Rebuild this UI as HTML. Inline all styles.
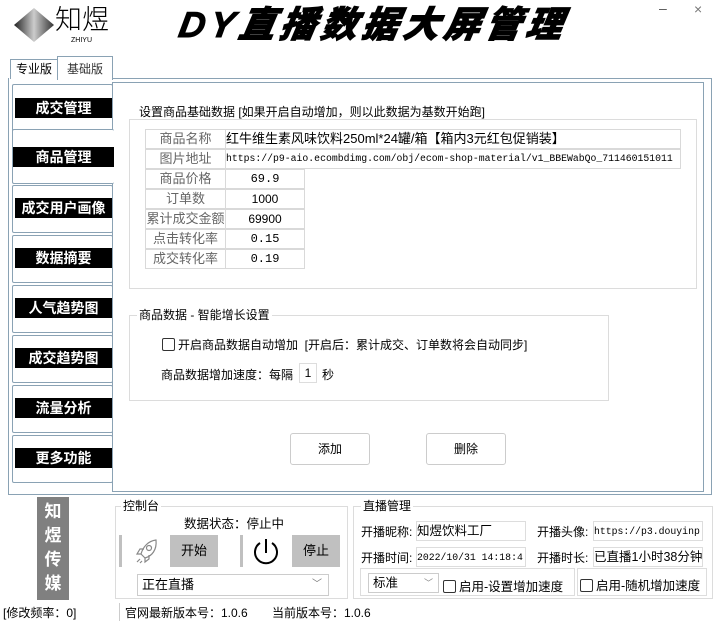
<!DOCTYPE html>
<html><head><meta charset="utf-8"><style>
*{margin:0;padding:0;box-sizing:border-box}
body{width:719px;height:621px;background:#fff;position:relative;overflow:hidden;font-family:"Liberation Sans","Noto Sans CJK SC",sans-serif;font-size:12px;color:#000}
.a{position:absolute}
.title{left:180px;top:-4px;font-size:36px;font-weight:900;font-style:italic;letter-spacing:5px;font-family:"Liberation Sans","Noto Sans CJK SC",sans-serif;transform:skewX(-10deg);white-space:nowrap;-webkit-text-stroke:1px #000}
.nav{position:absolute;left:12px;width:101px;height:48px;border:1px solid #8aa2b4;border-radius:2px;background:#fff}
.nav .bar{position:absolute;left:2px;right:0;top:14px;height:20px;background:#000;color:#fff;font-weight:bold;font-size:14px;text-align:center;line-height:20px}
.grp{position:absolute;border:1px solid #dcdcdc}
.gt{position:absolute;background:#fff;padding:0 2px;font-size:12px;line-height:14px}
.cell{position:absolute;border:1px solid #d9d9d9;height:20px;line-height:18px;font-size:12px;white-space:nowrap;overflow:hidden}
.lab{color:#666;text-align:center;font-size:13px}
.mono{font-family:"Liberation Mono","Noto Sans CJK SC",monospace}
.btn{position:absolute;border:1px solid #ccc;border-radius:3px;text-align:center;background:#fff}
.gb{position:absolute;background:#c0c0c0;text-align:center;font-size:13px}
.cb{display:inline-block;width:13px;height:13px;border:1px solid #333;border-radius:2px;vertical-align:-2px;margin-right:3px}
.inp{position:absolute;border:1px solid #ddd;height:20px;line-height:19px;white-space:nowrap;overflow:hidden;font-size:12px}
</style></head><body>
<svg class="a" style="left:12px;top:6px" width="44" height="38" viewBox="0 0 44 38"><defs><linearGradient id="g" x1="0" x2="1"><stop offset="0" stop-color="#222"/><stop offset=".5" stop-color="#ccc"/><stop offset="1" stop-color="#333"/></linearGradient></defs><polygon points="22,2 42,19 22,36 2,19" fill="url(#g)"/></svg>
<div class="a" style="left:55px;top:4px;font-size:27px;line-height:32px;font-weight:300">知煜</div>
<div class="a" style="left:71px;top:37px;font-size:7px">ZHIYU</div>
<div class="a title">DY直播数据大屏管理</div>
<div class="a" style="left:659px;top:0px;font-size:14px;color:#555">–</div>
<div class="a" style="left:694px;top:1px;font-size:14px;color:#777">×</div>
<div class="a" style="left:10px;top:59px;width:48px;height:20px;border:1px solid #8aa2b4;border-bottom:none;text-align:center;line-height:19px;font-size:12px">专业版</div>
<div class="a" style="left:57px;top:56px;width:56px;height:24px;border:1px solid #8aa2b4;border-bottom:none;background:#fff;text-align:center;line-height:24px;font-size:12px;color:#333">基础版</div>
<div class="a" style="left:8px;top:78px;width:704px;height:417px;border:1px solid #8aa2b4;border-top:none"></div>
<div class="a" style="left:112px;top:78px;width:600px;height:1px;background:#8aa2b4"></div>
<div class="a" style="left:112px;top:82px;width:592px;height:410px;border:1px solid #8aa2b4"></div>
<div class="nav" style="top:84px"><div class="bar" style="top:13px">成交管理</div></div>
<div class="nav" style="top:129px;height:55px;border-right:none;width:102px"><div class="bar" style="left:0;top:17px">商品管理</div></div>
<div class="nav" style="top:185px"><div class="bar" style="top:12px">成交用户画像</div></div>
<div class="nav" style="top:235px"><div class="bar" style="top:12px">数据摘要</div></div>
<div class="nav" style="top:285px"><div class="bar" style="top:12px">人气趋势图</div></div>
<div class="nav" style="top:335px"><div class="bar" style="top:12px">成交趋势图</div></div>
<div class="nav" style="top:385px"><div class="bar" style="top:12px">流量分析</div></div>
<div class="nav" style="top:435px"><div class="bar" style="top:12px">更多功能</div></div>
<div class="grp" style="left:129px;top:119px;width:568px;height:170px"></div>
<div class="gt" style="left:137px;top:105px">设置商品基础数据 [如果开启自动增加，则以此数据为基数开始跑]</div>
<div class="cell lab" style="left:145px;top:129px;width:81px">商品名称</div>
<div class="cell" style="left:225px;top:129px;width:456px;font-size:13px">红牛维生素风味饮料250ml*24罐/箱【箱内3元红包促销装】</div>
<div class="cell lab" style="left:145px;top:149px;width:81px">图片地址</div>
<div class="cell mono" style="left:225px;top:149px;width:456px;font-size:9.8px">https://p9-aio.ecombdimg.com/obj/ecom-shop-material/v1_BBEWabQo_711460151011</div>
<div class="cell lab" style="left:145px;top:169px;width:81px">商品价格</div><div class="cell mono" style="left:225px;top:169px;width:80px;text-align:center">69.9</div>
<div class="cell lab" style="left:145px;top:189px;width:81px">订单数</div><div class="cell" style="left:225px;top:189px;width:80px;text-align:center">1000</div>
<div class="cell lab" style="left:145px;top:209px;width:81px">累计成交金额</div><div class="cell" style="left:225px;top:209px;width:80px;text-align:center">69900</div>
<div class="cell lab" style="left:145px;top:229px;width:81px">点击转化率</div><div class="cell mono" style="left:225px;top:229px;width:80px;text-align:center">0.15</div>
<div class="cell lab" style="left:145px;top:249px;width:81px">成交转化率</div><div class="cell mono" style="left:225px;top:249px;width:80px;text-align:center">0.19</div>
<div class="grp" style="left:129px;top:315px;width:480px;height:86px"></div>
<div class="gt" style="left:137px;top:308px">商品数据 - 智能增长设置</div>
<div class="a" style="left:162px;top:336px;font-size:12px"><span class="cb"></span>开启商品数据自动增加&nbsp; [开启后：累计成交、订单数将会自动同步]</div>
<div class="a" style="left:161px;top:366px;font-size:12px">商品数据增加速度：每隔</div>
<div class="a" style="left:299px;top:363px;width:18px;height:20px;border:1px solid #ddd;text-align:center;line-height:19px">1</div>
<div class="a" style="left:322px;top:366px">秒</div>
<div class="btn" style="left:290px;top:433px;width:80px;height:32px;line-height:30px">添加</div>
<div class="btn" style="left:426px;top:433px;width:80px;height:32px;line-height:30px">删除</div>
<div class="a" style="left:37px;top:497px;width:32px;height:103px;background:#808080;color:#fff;font-weight:bold;font-size:17px;line-height:24px;text-align:center;padding-top:3px">知<br>煜<br>传<br>媒</div>
<div class="grp" style="left:115px;top:506px;width:233px;height:93px"></div>
<div class="gt" style="left:121px;top:499px">控制台</div>
<div class="a" style="left:184px;top:513px;font-size:12.5px">数据状态：停止中</div>
<div class="a" style="left:119px;top:535px;width:3px;height:32px;background:#c0c0c0"></div>
<svg class="a" style="left:134px;top:537px" width="26" height="28" viewBox="0 0 26 28" fill="none" stroke="#888" stroke-width="1.2"><path d="M22 3 C14 4 9 10 7 17 L11 21 C18 19 23 13 22 3Z"/><circle cx="15" cy="11" r="2.5"/><path d="M7 17 L3 17 L6 12 L10 12 M11 21 L11 25 L15 22 L15 18 M6 22 L3 25 M8 24 L6 26"/></svg>
<div class="gb" style="left:170px;top:535px;width:48px;height:32px;line-height:32px">开始</div>
<div class="a" style="left:240px;top:535px;width:3px;height:32px;background:#c0c0c0"></div>
<svg class="a" style="left:251px;top:537px" width="30" height="30" viewBox="0 0 30 30" fill="none" stroke="#000" stroke-width="2"><path d="M9 6 A11 11 0 1 0 21 6"/><path d="M15 2 L15 16"/></svg>
<div class="gb" style="left:292px;top:535px;width:48px;height:32px;line-height:32px">停止</div>
<div class="a" style="left:137px;top:574px;width:192px;height:22px;border:1px solid #ccc;line-height:20px;padding-left:4px;font-size:13px">正在直播<span style="position:absolute;right:6px;color:#777;font-size:10px">﹀</span></div>
<div class="grp" style="left:353px;top:506px;width:360px;height:93px"></div>
<div class="gt" style="left:361px;top:499px">直播管理</div>
<div class="a" style="left:361px;top:523px">开播昵称:</div>
<div class="inp" style="left:416px;top:521px;width:110px;font-size:12.5px">知煜饮料工厂</div>
<div class="a" style="left:537px;top:523px">开播头像:</div>
<div class="inp mono" style="left:593px;top:521px;width:110px;font-size:9.8px">https://p3.douyinp</div>
<div class="a" style="left:361px;top:549px">开播时间:</div>
<div class="inp mono" style="left:416px;top:547px;width:110px;font-size:9.8px">2022/10/31 14:18:4</div>
<div class="a" style="left:537px;top:549px">开播时长:</div>
<div class="inp" style="left:593px;top:547px;width:110px;font-size:12.5px">已直播1小时38分钟</div>
<div class="a" style="left:360px;top:568px;width:215px;height:28px;border:1px solid #ddd"></div>
<div class="a" style="left:577px;top:568px;width:130px;height:28px;border:1px solid #ddd"></div>
<div class="a" style="left:368px;top:573px;width:71px;height:20px;border:1px solid #ccc;line-height:19px;padding-left:4px;font-size:12.5px">标准<span style="position:absolute;right:5px;color:#888;font-size:9px">﹀</span></div>
<div class="a" style="left:443px;top:576px;font-size:12.5px"><span class="cb"></span>启用-设置增加速度</div>
<div class="a" style="left:580px;top:575px;font-size:12.5px"><span class="cb"></span>启用-随机增加速度</div>
<div class="a" style="left:3px;top:604px;font-size:12px">[修改频率：0]</div>
<div class="a" style="left:119px;top:603px;width:1px;height:18px;background:#ccc"></div>
<div class="a" style="left:125px;top:604px;font-size:12px">官网最新版本号：1.0.6</div>
<div class="a" style="left:272px;top:604px;font-size:12px">当前版本号：1.0.6</div>
</body></html>
